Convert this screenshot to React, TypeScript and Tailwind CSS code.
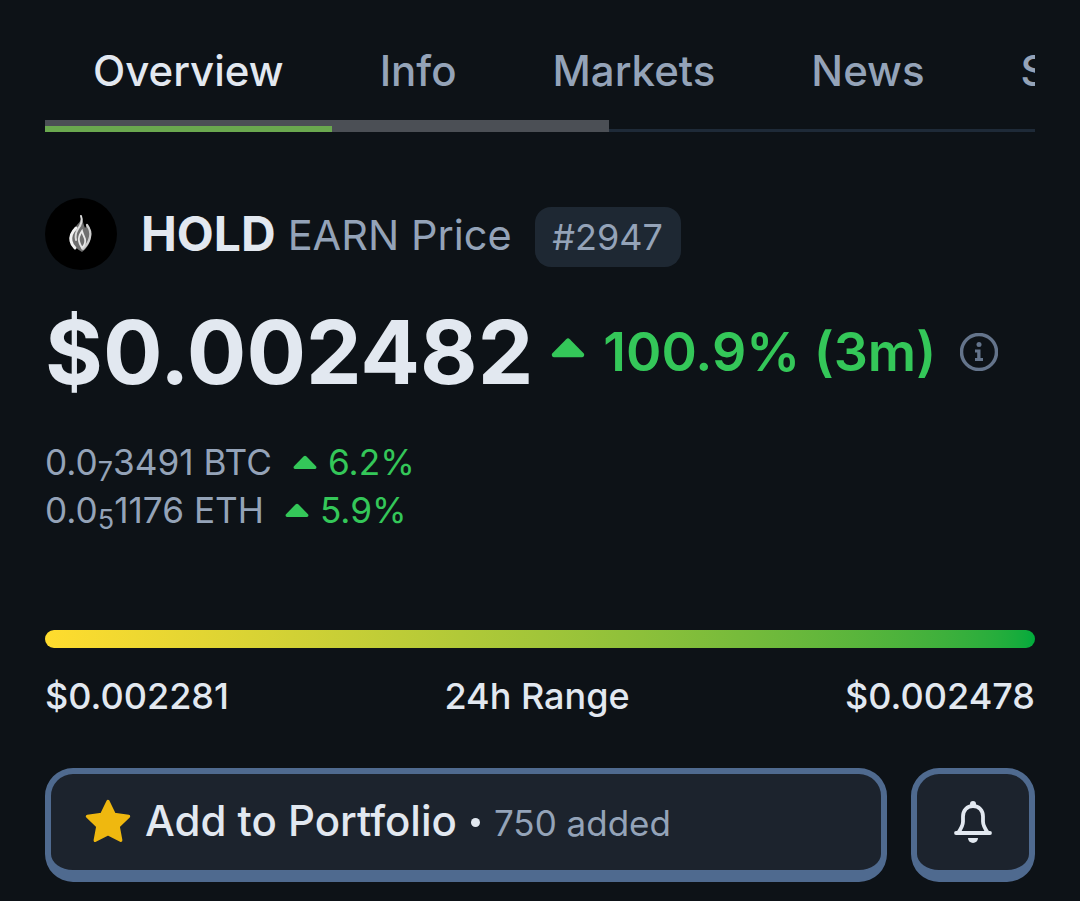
const TABS = ['Overview', 'Info', 'Markets', 'News', 'Spotlight']

function Caret({ className }: { className: string }) {
  return (
    <svg viewBox="0 0 34 20" className={className} aria-hidden>
      <path
        d="M15.2 1.2a2.600 2.600 0 0 1 3.600 0l13.800 14c1.300 1.400.500 4-1.600 4H3c-2.100 0-2.900-2.600-1.600-4z"
        fill="#34c759"
      />
    </svg>
  )
}

function FlameLogo() {
  return (
    <div className="flex h-[72px] w-[72px] shrink-0 items-center justify-center rounded-full bg-black">
      <svg viewBox="0 0 26 40" className="h-[40px] w-[26px]" aria-hidden>
        <path
          d="M13 1c2 5 2 9 4 13 1-1 2-3 2-4 3 4 5 8 4 13-1 7-5 12-9 15-5-3-11-8-11-15 0-5 3-8 6-12 3-3 5-6 4-10z"
          fill="#6f6f6f"
        />
        <path
          d="M8 14C4 18 2 22 3 27c.500 3 2 5 4 7"
          fill="none"
          stroke="#f2f2f2"
          strokeWidth="3"
          strokeLinecap="round"
        />
        <path
          d="M13 2c2 5 0 9-3 13-2 3-3 7-2 11"
          fill="none"
          stroke="#dcdcdc"
          strokeWidth="2"
          strokeLinecap="round"
        />
        <path
          d="M19 11c3 4 4 8 3 12-1 5-4 9-7 12"
          fill="none"
          stroke="#cfcfcf"
          strokeWidth="2.200"
          strokeLinecap="round"
        />
        <path
          d="M14 17c-2 3-4 6-3 10 .500 3 2 5 3 7 2-2 4-5 3-9-.500-2-2-4-3-8z"
          fill="none"
          stroke="#e8e8e8"
          strokeWidth="1.800"
          strokeLinecap="round"
        />
      </svg>
    </div>
  )
}

function InfoIcon() {
  return (
    <svg viewBox="0 0 38 38" className="h-[38px] w-[38px]" aria-hidden>
      <circle cx="19" cy="19" r="17.500" fill="none" stroke="#64748b" strokeWidth="3.500" />
      <circle cx="19" cy="11.500" r="2.500" fill="#64748b" />
      <path d="M15 16.500h5.500V25H23v3h-8v-3h2.200v-5.500H15z" fill="#64748b" />
    </svg>
  )
}

function BellIcon() {
  return (
    <svg viewBox="0 0 38 42" className="h-[42px] w-[38px]" aria-hidden>
      <path
        d="M19 5c-6 0-10 4.500-10 10.500v5c0 4.500-2.500 8-5 11.500h30c-2.500-3.500-5-7-5-11.500v-5C29 9.500 25 5 19 5z"
        fill="none"
        stroke="#e2e8f0"
        strokeWidth="3.800"
        strokeLinejoin="round"
      />
      <circle cx="19" cy="3" r="3" fill="#e2e8f0" />
      <path d="M14 37h10a5 5 0 0 1-10 0z" fill="#e2e8f0" />
      <path d="M2 32h34" stroke="#e2e8f0" strokeWidth="3.800" strokeLinecap="round" />
    </svg>
  )
}

function PairRow({
  zero,
  rest,
  symbol,
  change,
}: {
  zero: string
  rest: string
  symbol: string
  change: string
}) {
  return (
    <div className="flex h-[48px] items-center whitespace-nowrap">
      <span className="text-[#94a3b8]">
        0.0<sub className="text-[27px]">{zero}</sub>
        {rest} {symbol}
      </span>
      <Caret className="mr-[11px] ml-[21px] h-[15px] w-[24px]" />
      <span className="text-[#34c759]">{change}</span>
    </div>
  )
}

export default function App() {
  return (
    <div className="h-[901px] w-[1080px] overflow-hidden bg-[#0d1217] px-[45px] font-['Inter',sans-serif]">
      <div className="flex h-[120px] items-end gap-[96px] overflow-hidden pb-[21px] pl-[48px] text-[42px] leading-[56px] font-medium whitespace-nowrap text-[#94a3b8]">
        {TABS.map((tab, i) => (
          <span key={tab} className={i === 0 ? 'text-[#e2e8f0]' : ''}>
            {tab}
          </span>
        ))}
      </div>
      <div className="flex h-[12px] items-end border-b-[3px] border-[#1e2a38]">
        <div className="-mb-[3px] flex h-[12px] w-[564px] items-end bg-[#4b4f55]">
          <div className="h-[6px] w-[287px] bg-[#6aa84f]" />
        </div>
      </div>

      <div className="mt-[66px] flex h-[72px] items-center">
        <FlameLogo />
        <span className="ml-[24px] text-[48px] leading-none font-bold text-[#e2e8f0]">HOLD</span>
        <span className="ml-[12px] pt-[4px] text-[41.500px] leading-none text-[#94a3b8]">EARN Price</span>
        <span className="mt-[6px] ml-[23px] flex h-[60px] w-[146px] items-center justify-center rounded-[16px] bg-[#1e2833] text-[36px] text-[#94a3b8]">
          #2947
        </span>
      </div>

      <div className="mt-[22px] flex h-[120px] items-center whitespace-nowrap">
        <span className="text-[88.400px] leading-none font-bold text-[#e2e8f0]">$0.002482</span>
        <Caret className="mr-[18px] mb-[8px] ml-[18px] h-[20px] w-[34px]" />
        <span className="text-[53.700px] leading-none font-semibold text-[#34c759]">100.9% (3m)</span>
        <span className="ml-[24px] flex">
          <InfoIcon />
        </span>
      </div>

      <div className="mt-[26px] text-[35.200px]">
        <PairRow zero="7" rest="3491" symbol="BTC" change="6.2%" />
        <PairRow zero="5" rest="1176" symbol="ETH" change="5.9%" />
      </div>

      <div className="mt-[96px] h-[18px] rounded-full bg-gradient-to-r from-[#ffdc2e] to-[#00ab3c]" />

      <div className="mt-[26px] flex justify-between text-[36px] leading-[44px] font-medium text-[#e2e8f0]">
        <span>$0.002281</span>
        <span>24h Range</span>
        <span>$0.002478</span>
      </div>

      <div className="mt-[50px] flex gap-[24px]">
        <div className="flex h-[114px] w-[842px] items-center rounded-[28px] border-x-[6px] border-t-[6px] border-b-[12px] border-[#4f6a8f] bg-[#1c232d] pl-[31px]">
          <svg viewBox="0 0 24 24" className="h-[52px] w-[52px]" aria-hidden>
            <path
              d="M12 2.500l2.900 6 6.600.900-4.800 4.600 1.200 6.500L12 17.400l-5.900 3.100 1.200-6.500L2.500 9.400l6.600-.900z"
              fill="#efb80f"
              stroke="#efb80f"
              strokeWidth="1.500"
              strokeLinejoin="round"
            />
          </svg>
          <span className="ml-[11px] pb-[2px] text-[42px] leading-none font-medium text-[#e2e8f0]">Add to Portfolio</span>
          <span className="ml-[14px] h-[9px] w-[9px] rounded-full bg-[#e2e8f0]" />
          <span className="ml-[14px] pt-[2px] text-[35px] leading-none text-[#94a3b8]">750 added</span>
        </div>
        <div className="flex h-[114px] w-[124px] items-center justify-center rounded-[28px] border-x-[6px] border-t-[6px] border-b-[12px] border-[#4f6a8f] bg-[#1c232d]">
          <BellIcon />
        </div>
      </div>
    </div>
  )
}
